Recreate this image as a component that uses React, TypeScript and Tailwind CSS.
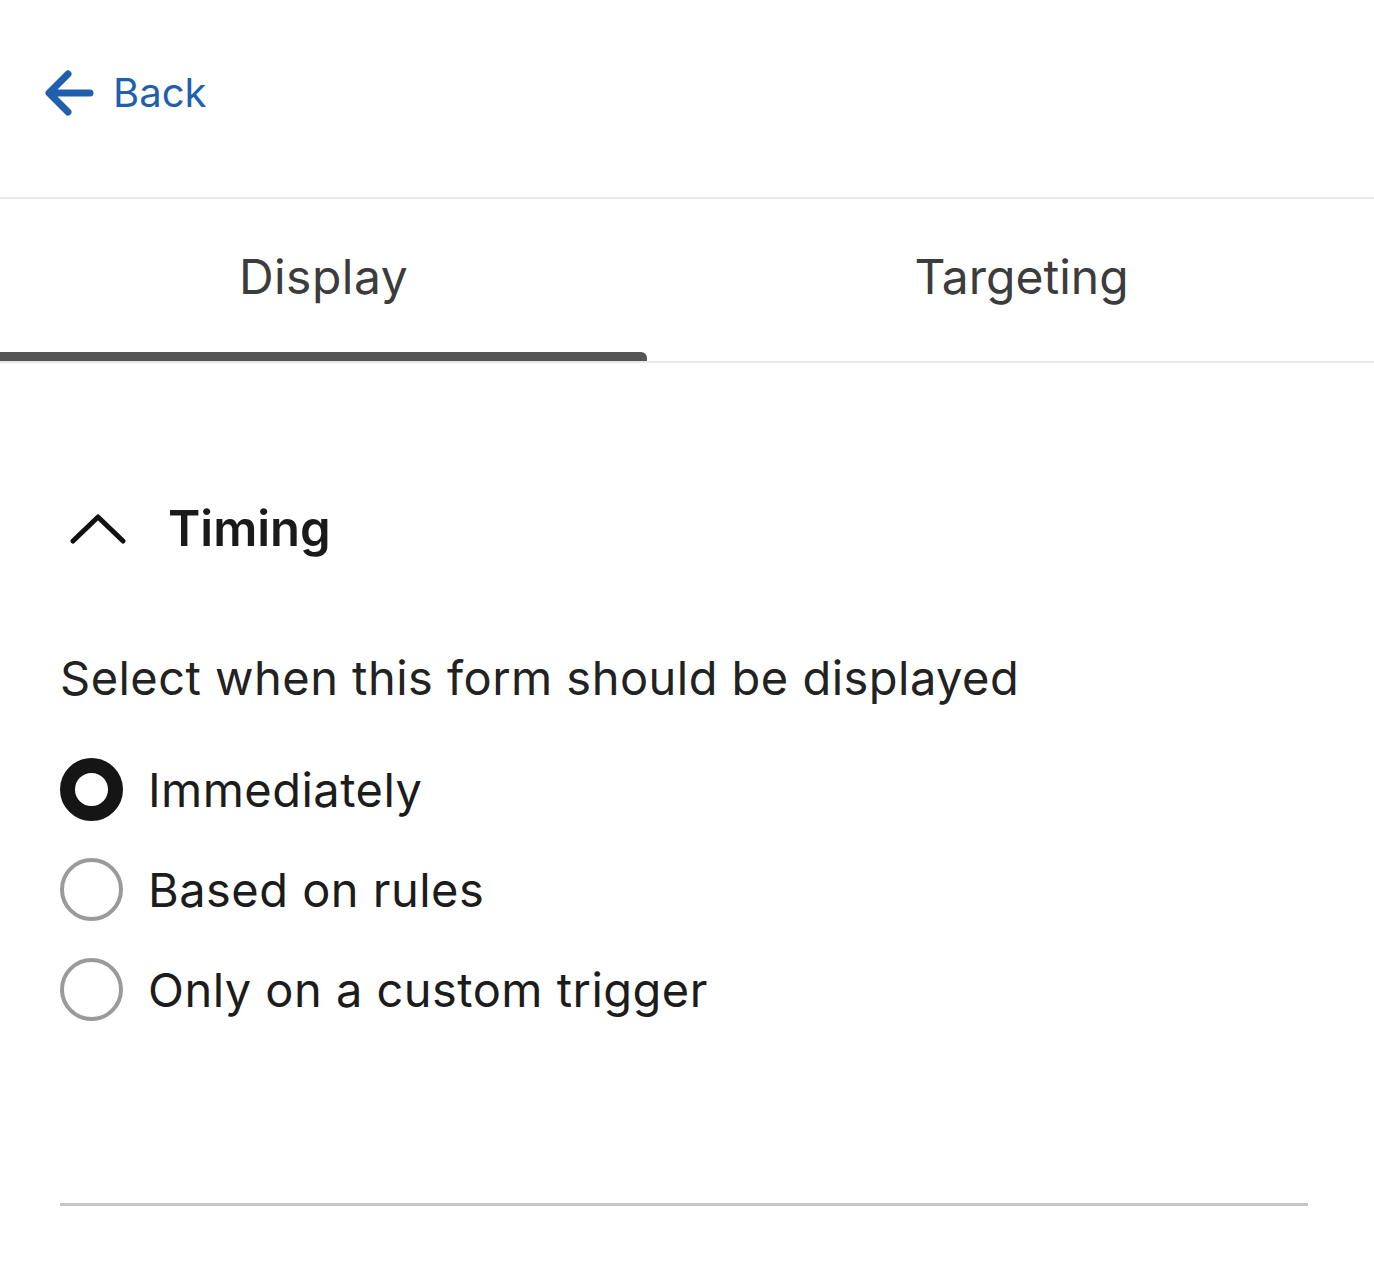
import { useState } from 'react';

const options = ['Immediately', 'Based on rules', 'Only on a custom trigger'];

export default function App() {
  const [tab, setTab] = useState<'display' | 'targeting'>('display');
  const [timing, setTiming] = useState(0);

  return (
    <div className="min-h-screen bg-white font-['Inter',sans-serif]">
      {/* header */}
      <div className="h-[197px] flex items-center pl-[44px] pb-[12px]">
        <button className="flex items-center gap-[17px] text-[#1f5fad]">
          <svg width="52" height="50" viewBox="0 0 52 50" fill="none" stroke="currentColor" strokeWidth="7" strokeLinecap="round" strokeLinejoin="round">
            <path d="M46 25H6M24 6L5 25l19 19" />
          </svg>
          <span className="text-[40px] leading-none">Back</span>
        </button>
      </div>

      {/* tabs */}
      <div className="border-t-2 border-[#e6e8eb]">
        <div className="flex border-b-2 border-[#e6e8eb]">
          <button
            onClick={() => setTab('display')}
            className="relative w-[647px] h-[162px] flex items-center justify-center pb-[6px] text-[48px] tracking-[0.01em] text-[#3c3c3c]"
          >
            Display
            {tab === 'display' && (
              <span className="absolute left-0 right-0 bottom-0 h-[9px] bg-[#555555] rounded-tr-[6px]" />
            )}
          </button>
          <button
            onClick={() => setTab('targeting')}
            className="relative flex-1 h-[162px] flex items-center justify-center pb-[6px] pl-[22px] text-[48px] text-[#3c3c3c]"
          >
            Targeting
            {tab === 'targeting' && (
              <span className="absolute left-0 right-0 bottom-0 h-[9px] bg-[#555555] rounded-tl-[6px]" />
            )}
          </button>
        </div>
      </div>

      {/* section */}
      <div className="px-[60px]">
        <div className="flex items-center gap-[42px] pt-[141px] pl-[10px]">
          <svg width="56" height="32" viewBox="0 0 56 32" fill="none" stroke="#111" strokeWidth="5" strokeLinecap="round" strokeLinejoin="round">
            <path d="M3 28L28 4l25 24" />
          </svg>
          <h2 className="text-[49px] font-semibold text-[#1a1a1a] leading-none">Timing</h2>
        </div>

        <p className="mt-[101px] text-[47px] tracking-[0.01em] text-[#222] leading-none">Select when this form should be displayed</p>

        <div className="mt-[38px] flex flex-col">
          {options.map((o, i) => (
            <label key={o} onClick={() => setTiming(i)} className="flex items-center gap-[25px] h-[100px] cursor-pointer">
              <span
                className={
                  'w-[63px] h-[63px] rounded-full shrink-0 ' +
                  (timing === i ? 'border-[15px] border-[#151515]' : 'border-[4px] border-[#9a9a9a]')
                }
              />
              <span className="text-[47px] tracking-[0.01em] text-[#1c1c1c] leading-none">{o}</span>
            </label>
          ))}
        </div>

        <div className="mt-[164px] mr-[6px] border-t-[3px] border-[#c6c6ca]" />
      </div>
    </div>
  );
}
